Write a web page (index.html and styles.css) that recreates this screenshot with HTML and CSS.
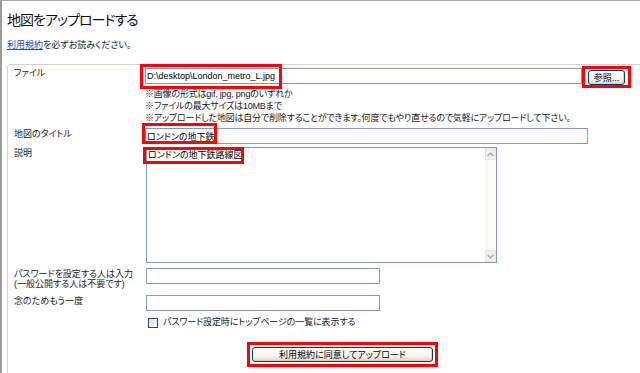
FILE: index.html
```html
<!DOCTYPE html>
<html lang="ja">
<head>
	<meta charset="utf-8">
	<title>地図をアップロードする</title>
	<link rel="stylesheet" href="styles.css">
</head>
<body>
<div class="page">
	<h1 class="page-title">地図をアップロードする</h1>
	<p class="notice"><a href="#">利用規約</a>を必ずお読みください。</p>

	<form class="upload-box">
		<div class="row row-file">
			<div class="label">ファイル</div>
			<div class="field">
				<div class="file-line">
					<div class="mark-host">
						<input type="text" class="text file-path" value="D:\desktop\London_metro_L.jpg">
						<span class="mark mark-file"></span>
					</div>
					<div class="mark-host">
						<button type="button" class="xp-button browse">参照...</button>
						<span class="mark mark-browse"></span>
					</div>
				</div>
				<ul class="hints">
					<li>※画像の形式はgif, jpg, pngのいずれか</li>
					<li>※ファイルの最大サイズは10MBまで</li>
					<li>※アップロードした地図は自分で削除することができます。何度でもやり直せるので気軽にアップロードして下さい。</li>
				</ul>
			</div>
		</div>

		<div class="row row-title">
			<div class="label">地図のタイトル</div>
			<div class="field mark-host">
				<input type="text" class="text map-title" value="ロンドンの地下鉄">
				<span class="mark mark-title"></span>
			</div>
		</div>

		<div class="row row-memo">
			<div class="label">説明</div>
			<div class="field">
				<div class="memo mark-host">
					<textarea class="memo-text">ロンドンの地下鉄路線図</textarea>
					<div class="vscroll">
						<span class="vscroll-btn">
							<svg width="7" height="5" viewBox="0 0 7 5"><polyline points="0.5,4 3.5,1 6.5,4" fill="none" stroke="#9aa6bd" stroke-width="1.2"/></svg>
						</span>
						<span class="vscroll-track"></span>
						<span class="vscroll-btn">
							<svg width="7" height="5" viewBox="0 0 7 5"><polyline points="0.5,1 3.5,4 6.5,1" fill="none" stroke="#9aa6bd" stroke-width="1.2"/></svg>
						</span>
					</div>
					<span class="mark mark-memo"></span>
				</div>
			</div>
		</div>

		<div class="row row-pass">
			<div class="label">パスワードを設定する人は入力<br>(一般公開する人は不要です)</div>
			<div class="field">
				<input type="password" class="text pass">
			</div>
		</div>

		<div class="row row-pass2">
			<div class="label">念のためもう一度</div>
			<div class="field">
				<input type="password" class="text pass">
			</div>
		</div>

		<div class="row row-check">
			<div class="label"></div>
			<label class="field check-line">
				<input type="checkbox" class="xp-check">
				<span>パスワード設定時にトップページの一覧に表示する</span>
			</label>
		</div>

		<div class="row row-submit">
			<div class="label"></div>
			<div class="field">
				<div class="mark-host submit-host">
					<button type="button" class="xp-button submit">利用規約に同意してアップロード</button>
					<span class="mark mark-submit"></span>
				</div>
			</div>
		</div>
	</form>
</div>
</body>
</html>
```

FILE: styles.css
```css
        html, body {
            overflow: hidden;
        }

        body {
            margin: 0;
            height: 372px;
            background: #FFFFFF;
            color: #1a1a1a;
            border-top: 1px solid #a8a8a8;
            border-left: 2px solid #9c9c9c;
            font-family: 'Liberation Sans', 'Noto Sans CJK JP', sans-serif;
            font-feature-settings: "palt";
            font-size: 9px;
        }

        input, textarea, button {
            font-feature-settings: "palt";
        }

        .page {
            padding-left: 5px;
        }

        .page-title {
            margin: 11px 0 0;
            font-size: 14px;
            line-height: 16px;
            font-weight: normal;
            letter-spacing: -1px;
            color: #111;
        }

        .notice {
            margin: 11px 0 13px;
            line-height: 12px;
        }

        .notice a {
            color: #2250b8;
            text-decoration: underline;
        }

        .upload-box {
            margin: 0 -30px 0 0;
            padding: 2px 0 40px;
            border: 1px solid #d3d3c8;
            border-radius: 3px;
        }

        .row {
            display: grid;
            grid-template-columns: 137px 1fr;
        }

        .label {
            padding: 1px 0 0 6px;
            line-height: 10px;
        }

        .row-title { margin-top: 4px; }
        .row-memo { margin-top: 3px; }
        .row-pass { margin-top: 5px; }
        .row-pass2 { margin-top: 6px; }
        .row-check { margin-top: 6px; }
        .row-submit { margin-top: 19px; }

        .mark-host {
            position: relative;
        }

        .file-line {
            display: flex;
            align-items: center;
            gap: 6px;
        }

        input.text {
            box-sizing: border-box;
            height: 16px;
            margin: 0;
            padding: 0 1px;
            border: 1px solid #7f9db9;
            background: #FFFFFF;
            font-family: inherit;
            font-size: 9px;
            color: #000;
            outline: none;
        }

        .file-path { width: 437px; display: block; }
        .map-title { width: 443px; display: block; }
        .pass { width: 234px; display: block; }

        .hints {
            margin: 3px 0 0;
            padding: 0;
            list-style: none;
            line-height: 12px;
            letter-spacing: -0.2px;
        }

        .xp-button {
            box-sizing: border-box;
            margin: 0;
            padding: 0;
            border: 1px solid #003c74;
            border-radius: 3px;
            background: linear-gradient(#FFFFFF, #f4f3ee 60%, #dcd9cc);
            box-shadow: inset -1px -1px 0 #d6d0c5;
            font-family: inherit;
            font-size: 9px;
            color: #000;
            cursor: pointer;
        }

        .browse {
            display: block;
            width: 37px;
            height: 15px;
            margin-top: 3px;
        }

        .memo {
            display: flex;
            box-sizing: border-box;
            width: 351px;
            height: 116px;
            margin-left: 1px;
            border: 1px solid #7f9db9;
        }

        .memo-text {
            flex: 1;
            margin: 0;
            padding: 1px 1px;
            border: none;
            resize: none;
            outline: none;
            font-family: inherit;
            font-size: 9px;
            line-height: 12px;
            color: #000;
        }

        .vscroll {
            display: flex;
            flex-direction: column;
            width: 11px;
            background: #faf9f5;
        }

        .vscroll-btn {
            display: flex;
            align-items: center;
            justify-content: center;
            height: 10px;
            background: #f0efe9;
            border: 1px solid #e8e6de;
            border-radius: 1px;
        }

        .vscroll-track {
            flex: 1;
        }

        .pass {
            margin-left: 1px !important;
        }

        .check-line {
            display: flex;
            align-items: center;
            gap: 5px;
            padding-left: 3px;
            line-height: 11px;
            letter-spacing: -0.1px;
        }

        .xp-check {
            appearance: none;
            box-sizing: border-box;
            width: 10px;
            height: 10px;
            margin: 0;
            border: 1px solid #1c5180;
            background: linear-gradient(135deg, #dcdcd7, #FFFFFF);
        }

        .submit-host {
            margin-left: 107px;
            width: 181px;
        }

        .submit {
            display: block;
            width: 181px;
            height: 15px;
        }

        .mark {
            position: absolute;
            box-sizing: border-box;
            border: 3px solid #f00;
            pointer-events: none;
        }

        .mark-file { left: -5px; top: -4px; width: 142px; height: 25px; }
        .mark-browse { left: -6px; top: -1px; width: 49px; height: 22px; }
        .mark-title { left: -3px; top: -5px; width: 75px; height: 21px; }
        .mark-memo { left: -4px; top: -1px; width: 101px; height: 17px; }
        .mark-submit { left: -5px; top: -5px; width: 191px; height: 25px; }
```
